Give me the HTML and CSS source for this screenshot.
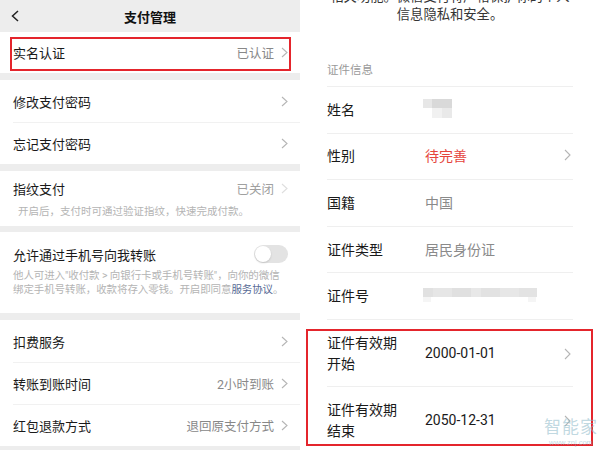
FILE: index.html
```html
<!DOCTYPE html>
<html lang="zh-CN">
<head>
    <meta charset="UTF-8">
    <meta name="viewport" content="width=device-width, initial-scale=1.0">
    <title>支付管理 / 证件信息</title>
    <link rel="stylesheet" href="styles.css">
</head>
<body>
<div class="page">

    <!-- left: payment settings -->
    <div class="screen settings">
        <div class="nav">
            <svg class="back" width="8" height="12" viewBox="0 0 8 12"><path d="M7 1 L1.5 6 L7 11" fill="none" stroke="#222" stroke-width="1.5"/></svg>
            <h1>支付管理</h1>
            <span></span>
        </div>

        <div class="group first">
            <div class="cell">
                <span class="label">实名认证</span>
                <span class="value">已认证</span>
                <svg class="chev" width="7" height="11" viewBox="0 0 7 11"><path d="M1 1 L6 5.5 L1 10" fill="none" stroke="#b5b5b5" stroke-width="1.1"/></svg>
            </div>
        </div>

        <div class="group list">
            <div class="cell">
                <span class="label">修改支付密码</span>
                <svg class="chev" width="7" height="11" viewBox="0 0 7 11"><path d="M1 1 L6 5.5 L1 10" fill="none" stroke="#b5b5b5" stroke-width="1.1"/></svg>
            </div>
            <div class="cell">
                <span class="label">忘记支付密码</span>
                <svg class="chev" width="7" height="11" viewBox="0 0 7 11"><path d="M1 1 L6 5.5 L1 10" fill="none" stroke="#b5b5b5" stroke-width="1.1"/></svg>
            </div>
        </div>

        <div class="group finger">
            <div class="cell short">
                <span class="label">指纹支付</span>
                <span class="value">已关闭</span>
                <svg class="chev" width="7" height="11" viewBox="0 0 7 11"><path d="M1 1 L6 5.5 L1 10" fill="none" stroke="#dedede" stroke-width="1.1"/></svg>
            </div>
            <p class="tip indent">开启后，支付时可通过验证指纹，快速完成付款。</p>
        </div>

        <div class="group phone">
            <div class="cell short">
                <span class="label">允许通过手机号向我转账</span>
                <span class="switch"><span class="knob"></span></span>
            </div>
            <p class="tip">他人可进入"收付款 &gt; 向银行卡或手机号转账"，向你的微信<br>绑定手机号转账，收款将存入零钱。开启即同意<a class="link">服务协议</a>。</p>
        </div>

        <div class="group list">
            <div class="cell">
                <span class="label">扣费服务</span>
                <svg class="chev" width="7" height="11" viewBox="0 0 7 11"><path d="M1 1 L6 5.5 L1 10" fill="none" stroke="#b5b5b5" stroke-width="1.1"/></svg>
            </div>
            <div class="cell">
                <span class="label">转账到账时间</span>
                <span class="value">2小时到账</span>
                <svg class="chev" width="7" height="11" viewBox="0 0 7 11"><path d="M1 1 L6 5.5 L1 10" fill="none" stroke="#b5b5b5" stroke-width="1.1"/></svg>
            </div>
            <div class="cell">
                <span class="label">红包退款方式</span>
                <span class="value">退回原支付方式</span>
                <svg class="chev" width="7" height="11" viewBox="0 0 7 11"><path d="M1 1 L6 5.5 L1 10" fill="none" stroke="#b5b5b5" stroke-width="1.1"/></svg>
            </div>
        </div>

        <div class="mark mark-name"></div>
    </div>

    <!-- right: id info -->
    <div class="screen idinfo">
        <p class="intro">相关功能。微信支付将严格保护你的个人<br>信息隐私和安全。</p>

        <div class="section">证件信息</div>

        <div class="row">
            <span class="key">姓名</span>
            <svg class="blur" width="30" height="20" viewBox="0 0 30 20">
                <rect x="0" y="0" width="9" height="9" fill="#e7e7e7"/>
                <rect x="9" y="0" width="20" height="9" fill="#d9d9d9"/>
                <rect x="9" y="9" width="10" height="10" fill="#f1f1f1"/>
                <rect x="19" y="9" width="10" height="10" fill="#e9e9e9"/>
            </svg>
        </div>
        <div class="row">
            <span class="key">性别</span>
            <span class="val red">待完善</span>
            <svg class="chev" width="7" height="12" viewBox="0 0 7 12"><path d="M1 1 L6 6 L1 11" fill="none" stroke="#b5b5b5" stroke-width="1.1"/></svg>
        </div>
        <div class="row">
            <span class="key">国籍</span>
            <span class="val gray">中国</span>
        </div>
        <div class="row">
            <span class="key">证件类型</span>
            <span class="val gray">居民身份证</span>
        </div>
        <div class="row">
            <span class="key">证件号</span>
            <svg class="blur" width="114" height="15" viewBox="0 0 114 15">
                <rect x="0" y="0" width="10" height="9" fill="#e1e1e1"/>
                <rect x="10" y="0" width="19" height="9" fill="#e6e6e6"/>
                <rect x="29" y="0" width="19" height="9" fill="#e0e0e0"/>
                <rect x="48" y="0" width="10" height="9" fill="#e8e8e8"/>
                <rect x="58" y="0" width="19" height="9" fill="#e2e2e2"/>
                <rect x="77" y="0" width="19" height="9" fill="#e7e7e7"/>
                <rect x="96" y="0" width="18" height="9" fill="#e3e3e3"/>
                <rect x="0" y="9" width="8" height="5" fill="#f5f5f5"/>
                <rect x="105" y="9" width="8" height="5" fill="#f5f5f5"/>
            </svg>
        </div>
        <div class="row double">
            <span class="key">证件有效期开始</span>
            <span class="val">2000-01-01</span>
            <svg class="chev" width="7" height="12" viewBox="0 0 7 12"><path d="M1 1 L6 6 L1 11" fill="none" stroke="#b5b5b5" stroke-width="1.1"/></svg>
        </div>
        <div class="row double">
            <span class="key">证件有效期结束</span>
            <span class="val">2050-12-31</span>
            <svg class="chev" width="7" height="12" viewBox="0 0 7 12"><path d="M1 1 L6 6 L1 11" fill="none" stroke="#b5b5b5" stroke-width="1.1"/></svg>
        </div>

        <div class="mark mark-dates"></div>
        <div class="watermark">
            <span class="wm-big">智能家</span>
            <span class="wm-small">www.znj.com</span>
        </div>
    </div>

</div>
</body>
</html>
```

FILE: styles.css
```css
* {
    box-sizing: border-box;
}

body {
    margin: 0;
    font-family: "Roboto", "Noto Sans CJK SC", "Noto Sans", sans-serif;
    color: #1a1a1a;
    background: #fff;
}

.page {
    display: flex;
    width: 600px;
    height: 450px;
    overflow: hidden;
}

.screen {
    position: relative;
    width: 300px;
    height: 450px;
    overflow: hidden;
}

/* left screen */
.settings {
    background: #ededed;
}

.nav {
    height: 32px;
    display: grid;
    grid-template-columns: 40px 1fr 40px;
    align-items: center;
}

.nav .back {
    margin-left: 11px;
}

.nav h1 {
    margin: 0;
    text-align: center;
    font-size: 13px;
    font-weight: 700;
    color: #111;
}

.group {
    background: #fff;
}

.group.first {
    height: 41px;
}

.group.list {
    margin-top: 7px;
    padding-left: 13px;
}

.group.finger {
    margin-top: 7px;
    padding-bottom: 7px;
}

.group.phone {
    margin-top: 6px;
    padding-top: 7px;
    height: 81px;
}

.group.list:last-of-type {
    margin-top: 8px;
}

.cell {
    display: flex;
    align-items: center;
    height: 42px;
    padding: 0 12px 0 13px;
    font-size: 13px;
}

.group.first .cell {
    height: 41px;
}

.group.list .cell {
    padding-left: 0;
}

.group.list .cell + .cell {
    border-top: 1px solid #f1f1f1;
}

.cell.short {
    height: 34px;
}

.group.phone .cell.short {
    height: 30px;
}

.cell .label {
    flex: 1;
}

.cell .value {
    font-size: 12.5px;
    color: #888;
    margin-right: 7px;
}

.group.finger .value {
    color: #a0a0a0;
}

.tip {
    margin: 0;
    padding: 0 13px;
    font-size: 10.5px;
    line-height: 14px;
    color: #b4b4b4;
    white-space: nowrap;
}

.tip.indent {
    padding-left: 18px;
}

.group.phone .tip {
    line-height: 13.5px;
    letter-spacing: -0.1px;
}

.link {
    color: #576b95;
}

.switch {
    width: 34px;
    height: 18px;
    border-radius: 9px;
    background: #e3e3e3;
    padding: 1px;
}

.knob {
    display: block;
    width: 16px;
    height: 16px;
    border-radius: 50%;
    background: #fff;
    box-shadow: 0 1px 2px rgba(0, 0, 0, 0.15);
}

/* right screen */
.idinfo {
    padding: 0 27px;
}

.intro {
    margin: -12px -20px 0;
    font-size: 13.3px;
    line-height: 18px;
    text-align: center;
    color: #353535;
}

.section {
    margin-top: 30px;
    height: 33px;
    line-height: 32px;
    font-size: 11.5px;
    color: #9a9a9a;
    border-bottom: 1px solid #efefef;
}

.row {
    display: flex;
    align-items: center;
    height: 46.6px;
    padding-right: 2px;
    padding-bottom: 2px;
    border-bottom: 1px solid #efefef;
    font-size: 14px;
}

.row .key {
    width: 98px;
    padding-right: 20px;
    flex-shrink: 0;
}

.row .val {
    flex: 1;
    color: #1a1a1a;
}

.row .val.red {
    color: #e5453d;
}

.row .val.gray {
    color: #8a8a8a;
}

.row .blur {
    margin-left: -2px;
}

.row.double {
    height: 67px;
    padding-bottom: 0;
    padding-top: 2px;
    line-height: 21px;
}

/* red annotation frames */
.mark {
    position: absolute;
    border: 2px solid #e4252c;
}

.mark-name {
    left: 10px;
    top: 37px;
    width: 281px;
    height: 34px;
}

.mark-dates {
    left: 6px;
    top: 329px;
    width: 287px;
    height: 117px;
}

.watermark {
    position: absolute;
    left: 244px;
    top: 416px;
    display: flex;
    flex-direction: column;
    align-items: center;
    color: rgba(140, 185, 200, 0.55);
}

.wm-big {
    font-size: 17px;
    line-height: 22px;
    letter-spacing: 1px;
}

.wm-small {
    font-family: "Liberation Sans", sans-serif;
    font-size: 7.5px;
    line-height: 9px;
}
```
